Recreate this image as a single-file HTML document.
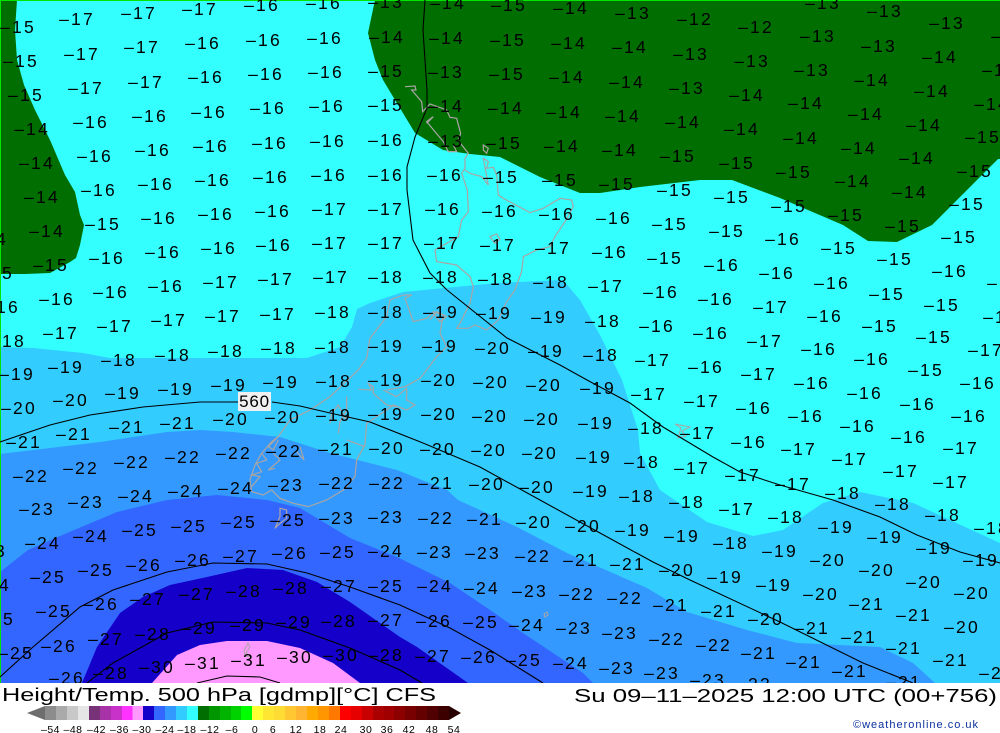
<!DOCTYPE html>
<html><head><meta charset="utf-8"><title>Height/Temp. 500 hPa</title>
<style>
html,body{margin:0;padding:0;background:#fff;width:1000px;height:733px;overflow:hidden}
svg{display:block}
.l text{font:17.5px "Liberation Sans",sans-serif;letter-spacing:2.2px;text-anchor:middle;fill:#000}
.c{fill:none;stroke:#000;stroke-width:1.1}
.g{fill:none;stroke:#aaa5a5;stroke-width:3.6}
.t text{font:10.5px "Liberation Sans",sans-serif;letter-spacing:.5px;text-anchor:middle;fill:#000}
</style></head><body>
<svg width="1000" height="733" viewBox="0 0 1000 733" xmlns="http://www.w3.org/2000/svg">
<rect width="1000" height="683" fill="#33ffff"/>
<path fill="#006e00" d="M1 0H17L15 30 17 60 24 85 35 110 50 140 65 175 75 192 80 215 84 225 80 245 76 258 70 262 50 273 25 274H1Z"/>
<path fill="#006e00" d="M375 0L368 33 375 60 383 80 415 133 443 150 470 154 500 157 540 177 580 193 600 193 640 187 700 180 732 180 780 198 843 225 868 241 897 242 932 225 967 190 998 159H1000V0Z"/>
<path fill="#33ccff" d="M0 347L33 348 83 353 110 358 200 358 307 358 340 347 352 327 357 309 370 303 403 292 497 283 563 280 580 300 600 335 622 380 638 430 640 453 660 490 707 522 753 536 783 530 823 503 860 492 913 503 1000 543V683H0Z"/>
<path fill="#3399ff" d="M0 454L100 442 167 432 200 430 233 432 280 437 330 453 397 470 447 490 458 500 517 527 567 553 647 588 687 612 747 630 797 643 840 645 880 647 913 663 935 683H0Z"/>
<path fill="#3366ff" d="M0 572L28 550 67 533 117 512 167 500 217 495 267 500 300 508 350 538 397 557 450 583 490 610 523 633 583 673 593 683H0Z"/>
<path fill="#1400c8" d="M82 683L97 647 120 613 143 597 170 585 207 577 247 568 283 570 317 582 350 602 400 637 417 647 468 683Z"/>
<path fill="#ff99ff" d="M152 683L177 655 200 645 227 641 267 641 300 648 333 663 360 683Z"/>
<rect x="0" y="0" width="1000" height="1" fill="#00e600"/>
<rect x="0" y="0" width="1" height="683" fill="#00e600"/>

<g transform="translate(230 80) scale(.3333)" class="g">
<path d="M525 20 555 18 558 30 545 30 575 65 578 95 600 72 650 90 660 112 680 115 692 160 685 182 715 220 705 235 705 265 695 280 712 330 715 395 695 420 685 470 650 490 615 510 620 545 680 555 720 590 730 620 720 670 690 730 680 745 715 745 735 735 770 750 805 720 830 665 855 630 875 575 880 530 920 510 960 500 975 470 1005 425 1030 380 1025 360 990 355 940 385 900 398 820 355 805 345 800 285 790 262 770 265 775 245 760 235 775 315 755 290 720 280 705 270"/>
<path d="M590 130 610 110 590 125 640 185 655 215 680 215 670 195"/>
<path d="M760 195 775 205 770 220 760 210Z"/>
<path d="M780 470 800 462 810 478 795 490Z"/>
<path d="M600 720 620 695 650 710 630 725 610 700"/>
</g>
<g transform="translate(230 290) scale(.3333)" class="g">
<path d="M520 15 545 15 525 25 550 95 590 85 610 65 640 75 630 130 650 170 620 200 590 240 570 265 525 290 470 300"/>
<path d="M520 15 480 30 470 80 420 145 410 205 385 240 300 320 240 360 180 390 145 440 125 455 95 490 75 525 60 570 65 605 100 615 125 600 150 625 190 640 235 650 290 630 340 600 375 560 380 510 405 465 410 400 470 360 490 345 530 360 555 345 530 330 530 295 500 320 460 300"/>
<path d="M385 298 425 300 415 280 430 290 430 310 470 345 500 350"/>
<path d="M350 320 350 360 330 395 325 430M300 400 305 370 325 345 345 385 360 380M350 450 405 470"/>
<path d="M150 655 170 660 170 685 150 700 135 715 150 680Z"/>
<path d="M145 440 115 470 130 480 145 450M130 490 150 510 115 540 135 535M210 470 222 510 200 485M95 490 110 510 80 520 95 545 65 555 90 560 65 590"/>
</g>
<path class="g" style="stroke-width:1" d="M675 424 690 427 682 431 686 436 678 438 681 428ZM544 614 547 612 548 615 545 617ZM248 643 250 647 246 653 252 657 245 656 244 651Z"/>

<path class="c" d="M425 0 423 30 425 60 427 90 427 108 415 137 407 167 407 190 413 240 430 273 447 290 507 338 560 365 587 380 630 403 663 427 713 457 740 472 780 485 833 500 880 517 917 535 960 552 1000 563"/>
<path class="c" d="M0 442 50 425 90 415 143 407 200 402 238 402M272 402 300 406 330 413 370 422 423 443 480 467 540 500 600 533 653 562 690 580 780 622 863 663 913 683"/>
<path class="c" d="M0 677 33 647 80 607 113 590 167 572 213 563 267 564 307 573 350 587 400 605 450 628 490 650 543 683"/>
<path class="c" d="M87 683 113 663 167 633 213 622 267 623 300 630 350 648 400 670 422 683"/>
<path class="c" d="M197 683 227 676 260 677 280 683"/>
<rect x="238" y="392" width="33" height="19" fill="#f0f0f0"/>
<text x="254.500" y="407" text-anchor="middle" font-family="Liberation Sans, sans-serif" font-size="17" letter-spacing=".8">560</text>

<g class="l" transform="translate(1 0)">
<text x="17" y="33">–15</text><text x="76" y="25">–17</text><text x="138" y="19">–17</text><text x="199" y="15">–17</text><text x="261" y="11">–16</text><text x="323" y="9">–16</text><text x="385" y="8">–13</text><text x="447" y="9">–14</text><text x="508" y="11">–15</text><text x="570" y="14">–14</text><text x="632" y="19">–13</text><text x="694" y="25">–12</text><text x="755" y="33">–12</text><text x="822" y="9">–13</text><text x="884" y="17">–13</text><text x="946" y="29">–13</text>
<text x="20" y="67">–15</text><text x="81" y="60">–17</text><text x="141" y="53">–17</text><text x="202" y="49">–16</text><text x="263" y="46">–16</text><text x="324" y="44">–16</text><text x="386" y="43">–14</text><text x="446" y="44">–14</text><text x="507" y="46">–15</text><text x="568" y="49">–14</text><text x="629" y="53">–14</text><text x="690" y="60">–13</text><text x="751" y="67">–13</text><text x="817" y="42">–13</text><text x="878" y="52">–13</text><text x="939" y="63">–14</text><text x="1008" y="42">–13</text>
<text x="25" y="101">–15</text><text x="85" y="94">–17</text><text x="145" y="88">–17</text><text x="205" y="83">–16</text><text x="265" y="80">–16</text><text x="325" y="78">–16</text><text x="385" y="77">–15</text><text x="445" y="78">–13</text><text x="506" y="80">–15</text><text x="566" y="83">–14</text><text x="626" y="88">–14</text><text x="686" y="94">–13</text><text x="746" y="101">–14</text><text x="811" y="76">–13</text><text x="871" y="86">–14</text><text x="931" y="97">–14</text><text x="999" y="76">–14</text>
<text x="31" y="135">–14</text><text x="90" y="128">–16</text><text x="149" y="122">–16</text><text x="208" y="118">–16</text><text x="267" y="114">–16</text><text x="326" y="112">–16</text><text x="385" y="111">–15</text><text x="445" y="112">–14</text><text x="505" y="114">–14</text><text x="563" y="118">–14</text><text x="622" y="122">–14</text><text x="682" y="128">–14</text><text x="741" y="135">–14</text><text x="805" y="109">–14</text><text x="865" y="120">–14</text><text x="923" y="131">–14</text><text x="982" y="143">–15</text><text x="991" y="110">–14</text>
<text x="36" y="169">–14</text><text x="94" y="162">–16</text><text x="152" y="156">–16</text><text x="210" y="152">–16</text><text x="269" y="149">–16</text><text x="327" y="147">–16</text><text x="385" y="146">–16</text><text x="445" y="147">–13</text><text x="503" y="149">–15</text><text x="561" y="152">–14</text><text x="619" y="156">–14</text><text x="677" y="162">–15</text><text x="736" y="169">–15</text><text x="800" y="144">–14</text><text x="858" y="154">–14</text><text x="916" y="164">–14</text><text x="974" y="177">–15</text>
<text x="41" y="203">–14</text><text x="98" y="196">–16</text><text x="155" y="190">–16</text><text x="212" y="186">–16</text><text x="270" y="183">–16</text><text x="328" y="181">–16</text><text x="385" y="181">–16</text><text x="444" y="181">–16</text><text x="500" y="183">–15</text><text x="559" y="186">–15</text><text x="616" y="190">–15</text><text x="674" y="196">–15</text><text x="731" y="203">–15</text><text x="793" y="178">–15</text><text x="852" y="187">–14</text><text x="909" y="198">–14</text><text x="966" y="210">–15</text>
<text x="46" y="237">–14</text><text x="102" y="230">–15</text><text x="158" y="224">–16</text><text x="215" y="220">–16</text><text x="272" y="217">–16</text><text x="329" y="215">–17</text><text x="385" y="215">–17</text><text x="442" y="215">–16</text><text x="499" y="217">–16</text><text x="556" y="220">–16</text><text x="613" y="224">–16</text><text x="669" y="230">–15</text><text x="726" y="237">–15</text><text x="788" y="212">–15</text><text x="845" y="221">–15</text><text x="902" y="232">–15</text><text x="958" y="243">–15</text>
<text x="-11" y="245">–14</text><text x="50" y="271">–15</text><text x="106" y="264">–16</text><text x="162" y="258">–16</text><text x="218" y="254">–16</text><text x="273" y="251">–16</text><text x="329" y="249">–17</text><text x="385" y="249">–17</text><text x="441" y="249">–17</text><text x="497" y="251">–17</text><text x="552" y="254">–17</text><text x="609" y="258">–16</text><text x="664" y="264">–15</text><text x="721" y="271">–16</text><text x="782" y="245">–16</text><text x="838" y="254">–15</text><text x="894" y="265">–15</text><text x="949" y="277">–16</text>
<text x="-5" y="279">–15</text><text x="56" y="305">–16</text><text x="110" y="298">–16</text><text x="165" y="292">–16</text><text x="220" y="288">–17</text><text x="275" y="285">–17</text><text x="330" y="283">–17</text><text x="385" y="283">–18</text><text x="440" y="283">–18</text><text x="495" y="285">–18</text><text x="550" y="288">–18</text><text x="605" y="292">–17</text><text x="660" y="298">–16</text><text x="715" y="305">–16</text><text x="776" y="279">–16</text><text x="831" y="289">–16</text><text x="886" y="300">–15</text><text x="941" y="311">–15</text><text x="1004" y="289">–16</text>
<text x="1" y="313">–16</text><text x="60" y="339">–17</text><text x="114" y="332">–17</text><text x="168" y="326">–17</text><text x="222" y="322">–17</text><text x="277" y="320">–17</text><text x="332" y="318">–18</text><text x="385" y="318">–18</text><text x="440" y="318">–19</text><text x="493" y="319">–19</text><text x="548" y="323">–19</text><text x="602" y="327">–18</text><text x="656" y="332">–16</text><text x="710" y="339">–16</text><text x="770" y="313">–17</text><text x="824" y="322">–16</text><text x="879" y="332">–15</text><text x="933" y="343">–15</text><text x="1000" y="323">–16</text>
<text x="7" y="347">–18</text><text x="65" y="373">–19</text><text x="118" y="366">–18</text><text x="172" y="361">–18</text><text x="225" y="357">–18</text><text x="278" y="354">–18</text><text x="332" y="353">–18</text><text x="385" y="352">–19</text><text x="439" y="352">–19</text><text x="492" y="354">–20</text><text x="545" y="357">–19</text><text x="600" y="361">–18</text><text x="652" y="366">–17</text><text x="705" y="373">–16</text><text x="764" y="347">–17</text><text x="818" y="355">–16</text><text x="871" y="365">–16</text><text x="925" y="376">–15</text><text x="985" y="356">–17</text>
<text x="16" y="380">–19</text><text x="122" y="399">–19</text><text x="175" y="395">–19</text><text x="228" y="391">–19</text><text x="280" y="388">–19</text><text x="333" y="387">–18</text><text x="385" y="386">–19</text><text x="438" y="386">–20</text><text x="490" y="388">–20</text><text x="543" y="391">–20</text><text x="597" y="394">–19</text><text x="648" y="400">–17</text><text x="701" y="407">–17</text><text x="758" y="380">–17</text><text x="811" y="389">–16</text><text x="864" y="399">–16</text><text x="917" y="410">–16</text><text x="977" y="389">–16</text>
<text x="18" y="414">–20</text><text x="70" y="406">–20</text><text x="126" y="433">–21</text><text x="177" y="429">–21</text><text x="230" y="425">–20</text><text x="282" y="423">–20</text><text x="333" y="421">–19</text><text x="385" y="420">–19</text><text x="438" y="420">–20</text><text x="489" y="422">–20</text><text x="541" y="425">–20</text><text x="595" y="429">–19</text><text x="645" y="434">–18</text><text x="697" y="439">–17</text><text x="753" y="414">–16</text><text x="805" y="422">–16</text><text x="857" y="432">–16</text><text x="908" y="443">–16</text><text x="968" y="422">–16</text>
<text x="23" y="448">–21</text><text x="73" y="440">–21</text><text x="131" y="468">–22</text><text x="182" y="463">–22</text><text x="233" y="459">–22</text><text x="283" y="457">–22</text><text x="335" y="455">–21</text><text x="386" y="454">–20</text><text x="437" y="455">–20</text><text x="488" y="456">–20</text><text x="539" y="459">–20</text><text x="593" y="463">–19</text><text x="641" y="468">–18</text><text x="691" y="474">–17</text><text x="748" y="448">–16</text><text x="798" y="455">–17</text><text x="849" y="465">–17</text><text x="900" y="477">–17</text><text x="960" y="454">–17</text>
<text x="30" y="482">–22</text><text x="80" y="474">–22</text><text x="135" y="502">–24</text><text x="185" y="497">–24</text><text x="235" y="494">–24</text><text x="285" y="491">–23</text><text x="336" y="489">–22</text><text x="386" y="489">–22</text><text x="435" y="489">–21</text><text x="486" y="490">–20</text><text x="536" y="493">–20</text><text x="590" y="497">–19</text><text x="636" y="502">–18</text><text x="686" y="508">–18</text><text x="742" y="481">–17</text><text x="792" y="490">–17</text><text x="842" y="499">–18</text><text x="892" y="510">–18</text><text x="950" y="488">–17</text>
<text x="-17" y="523">–22</text><text x="36" y="515">–23</text><text x="85" y="508">–23</text><text x="139" y="536">–25</text><text x="188" y="532">–25</text><text x="238" y="528">–25</text><text x="287" y="526">–25</text><text x="336" y="524">–23</text><text x="385" y="523">–23</text><text x="435" y="524">–22</text><text x="484" y="525">–21</text><text x="533" y="528">–20</text><text x="582" y="532">–20</text><text x="632" y="536">–19</text><text x="681" y="542">–19</text><text x="736" y="515">–17</text><text x="785" y="523">–18</text><text x="835" y="533">–19</text><text x="884" y="543">–19</text><text x="942" y="521">–18</text><text x="991" y="534">–18</text>
<text x="-12" y="557">–23</text><text x="42" y="549">–24</text><text x="90" y="542">–24</text><text x="143" y="571">–26</text><text x="192" y="566">–26</text><text x="240" y="562">–27</text><text x="289" y="559">–26</text><text x="337" y="558">–25</text><text x="385" y="557">–24</text><text x="434" y="558">–23</text><text x="482" y="559">–23</text><text x="532" y="562">–22</text><text x="580" y="566">–21</text><text x="627" y="570">–21</text><text x="676" y="576">–20</text><text x="730" y="549">–18</text><text x="779" y="557">–19</text><text x="827" y="566">–20</text><text x="876" y="576">–20</text><text x="933" y="554">–19</text><text x="980" y="566">–19</text>
<text x="-8" y="591">–24</text><text x="47" y="583">–25</text><text x="95" y="576">–25</text><text x="147" y="605">–27</text><text x="196" y="600">–27</text><text x="243" y="597">–28</text><text x="290" y="594">–28</text><text x="338" y="592">–27</text><text x="385" y="592">–25</text><text x="434" y="592">–24</text><text x="481" y="594">–24</text><text x="529" y="597">–23</text><text x="576" y="600">–22</text><text x="624" y="604">–22</text><text x="670" y="611">–21</text><text x="724" y="583">–19</text><text x="773" y="591">–19</text><text x="820" y="600">–20</text><text x="866" y="610">–21</text><text x="923" y="588">–20</text><text x="971" y="599">–20</text>
<text x="-4" y="625">–25</text><text x="53" y="617">–25</text><text x="100" y="610">–26</text><text x="152" y="640">–28</text><text x="198" y="634">–29</text><text x="247" y="631">–29</text><text x="293" y="628">–29</text><text x="338" y="627">–28</text><text x="385" y="626">–27</text><text x="433" y="627">–26</text><text x="480" y="628">–25</text><text x="526" y="631">–24</text><text x="573" y="634">–23</text><text x="619" y="639">–23</text><text x="666" y="645">–22</text><text x="718" y="617">–21</text><text x="765" y="625">–20</text><text x="811" y="634">–21</text><text x="858" y="643">–21</text><text x="913" y="621">–21</text><text x="961" y="633">–20</text>
<text x="15" y="659">–25</text><text x="58" y="652">–26</text><text x="105" y="645">–27</text><text x="110" y="679">–28</text><text x="156" y="673">–30</text><text x="202" y="669">–31</text><text x="248" y="666">–31</text><text x="294" y="663">–30</text><text x="340" y="661">–30</text><text x="385" y="661">–28</text><text x="432" y="662">–27</text><text x="478" y="663">–26</text><text x="523" y="666">–25</text><text x="570" y="669">–24</text><text x="616" y="674">–23</text><text x="661" y="679">–23</text><text x="713" y="651">–22</text><text x="758" y="659">–21</text><text x="803" y="668">–21</text><text x="849" y="677">–21</text><text x="903" y="654">–21</text><text x="950" y="666">–21</text><text x="996" y="679">–21</text>
<text x="66" y="684">–26</text><text x="707" y="686">–23</text><text x="753" y="690">–22</text><text x="903" y="688">–21</text>
</g>

<rect x="0" y="683" width="1000" height="50" fill="#fff"/>
<text x="2" y="701" font-family="Liberation Sans, sans-serif" font-size="18" textLength="434" lengthAdjust="spacingAndGlyphs" fill="#000">Height/Temp. 500 hPa [gdmp][°C] CFS</text>
<text x="574" y="702" font-family="Liberation Sans, sans-serif" font-size="18" textLength="423" lengthAdjust="spacingAndGlyphs" fill="#000">Su 09–11–2025 12:00 UTC (00+756)</text>
<text x="853" y="728" font-family="Liberation Sans, sans-serif" font-size="11" textLength="125" lengthAdjust="spacing" fill="#0a2f9e">©weatheronline.co.uk</text>

<polygon points="27,713 45,706 45,720" fill="#6e6e6e"/>
<g>
<rect x="45" y="706" width="11" height="14" fill="#8c8c8c"/><rect x="56" y="706" width="11" height="14" fill="#aaaaaa"/><rect x="67" y="706" width="11" height="14" fill="#c8c8c8"/><rect x="78" y="706" width="11" height="14" fill="#e6e6e6"/>
<rect x="89" y="706" width="11" height="14" fill="#783278"/><rect x="100" y="706" width="11" height="14" fill="#a832a8"/><rect x="111" y="706" width="11" height="14" fill="#c832c8"/><rect x="122" y="706" width="11" height="14" fill="#ff32ff"/><rect x="132.500" y="706" width="11" height="14" fill="#ff99ff"/>
<rect x="143" y="706" width="11" height="14" fill="#1400c8"/><rect x="154" y="706" width="11" height="14" fill="#3366ff"/><rect x="165" y="706" width="11" height="14" fill="#3399ff"/><rect x="176" y="706" width="11" height="14" fill="#33ccff"/><rect x="187" y="706" width="11" height="14" fill="#33ffff"/>
<rect x="198" y="706" width="11" height="14" fill="#006e00"/><rect x="209" y="706" width="11" height="14" fill="#009600"/><rect x="220" y="706" width="11" height="14" fill="#00b400"/><rect x="231" y="706" width="11" height="14" fill="#00d200"/><rect x="241" y="706" width="11" height="14" fill="#00ff00"/>
<rect x="252" y="706" width="11" height="14" fill="#ffff33"/><rect x="263" y="706" width="11" height="14" fill="#ffe633"/><rect x="274" y="706" width="11" height="14" fill="#ffdc33"/><rect x="285" y="706" width="11" height="14" fill="#ffc833"/><rect x="296" y="706" width="11" height="14" fill="#ffb432"/><rect x="307" y="706" width="11" height="14" fill="#ffaa00"/><rect x="318" y="706" width="11" height="14" fill="#ff9600"/><rect x="329" y="706" width="11" height="14" fill="#ff7800"/>
<rect x="340" y="706" width="11" height="14" fill="#ff0000"/><rect x="351" y="706" width="11" height="14" fill="#e60000"/><rect x="362" y="706" width="11" height="14" fill="#c80000"/><rect x="373" y="706" width="11" height="14" fill="#aa0000"/><rect x="384" y="706" width="11" height="14" fill="#a00000"/><rect x="394" y="706" width="11" height="14" fill="#8c0000"/><rect x="405" y="706" width="11" height="14" fill="#780000"/><rect x="416" y="706" width="11" height="14" fill="#640000"/><rect x="427" y="706" width="11" height="14" fill="#500000"/><rect x="438" y="706" width="11" height="14" fill="#3c0000"/>
</g>
<polygon points="449,706 461,713 449,720" fill="#280000"/>
<g class="t">
<text x="50.500" y="733">–54</text><text x="73" y="733">–48</text><text x="96.500" y="733">–42</text><text x="119.500" y="733">–36</text><text x="142" y="733">–30</text><text x="165" y="733">–24</text><text x="187" y="733">–18</text><text x="210" y="733">–12</text><text x="232" y="733">–6</text><text x="255" y="733">0</text><text x="273" y="733">6</text><text x="296" y="733">12</text><text x="320" y="733">18</text><text x="341" y="733">24</text><text x="366" y="733">30</text><text x="387" y="733">36</text><text x="409" y="733">42</text><text x="432" y="733">48</text><text x="454" y="733">54</text>
</g>
</svg>
</body></html>
